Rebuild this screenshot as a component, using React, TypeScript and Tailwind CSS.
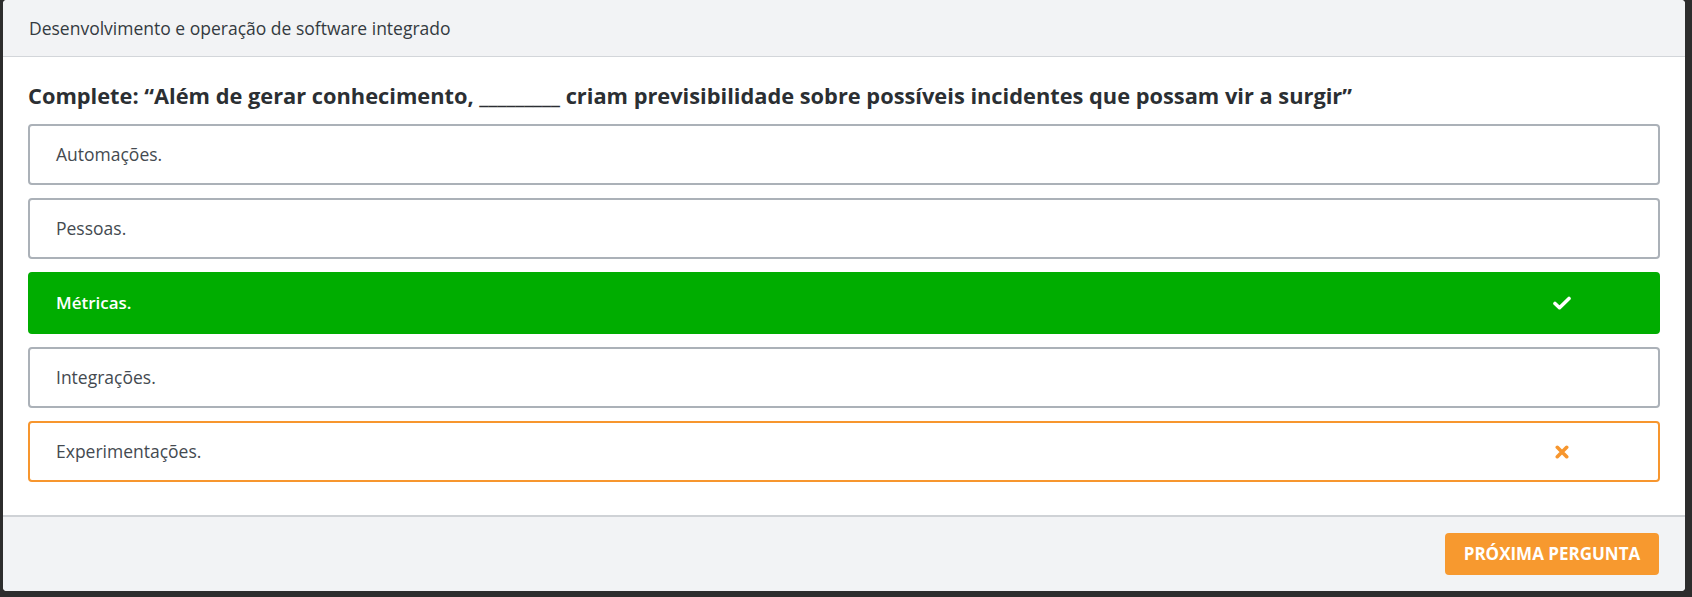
import React from "react";

const options = [
  { text: "Automações.", state: "none" },
  { text: "Pessoas.", state: "none" },
  { text: "Métricas.", state: "correct" },
  { text: "Integrações.", state: "none" },
  { text: "Experimentações.", state: "wrong" },
];

function Check() {
  return (
    <svg width="18" height="14" viewBox="0 0 18 14" aria-hidden="true">
      <path d="M2 7.5 L6.5 11.7 L16 2.5" fill="none" stroke="#fff" strokeWidth="3.6" strokeLinecap="round" strokeLinejoin="round" />
    </svg>
  );
}

function Cross() {
  return (
    <svg width="14" height="14" viewBox="0 0 14 14" aria-hidden="true">
      <path d="M2.3 2.3 L11.7 11.7 M11.7 2.3 L2.3 11.7" fill="none" stroke="#f7962e" strokeWidth="3.6" strokeLinecap="round" />
    </svg>
  );
}

export default function App() {
  return (
    <div
      className="w-full h-[597px] bg-[#2d2d2d] pl-[3px] pr-[7px] pb-[6px]"
      style={{ fontFamily: '"Open Sans", "Noto Sans", sans-serif' }}
    >
      <div className="h-[591px] bg-white rounded-[4px] overflow-hidden flex flex-col">
        <div className="h-[57px] shrink-0 bg-[#f2f3f5] border-b border-[#d3d6da] px-[26px] flex items-center text-[17.5px] text-[#343a40]">
          Desenvolvimento e operação de software integrado
        </div>
        <div className="px-[25px] pt-[25px] pb-[33px]">
          <div className="text-[21.8px] leading-[28px] font-bold text-[#2b2f33] mb-[14px] whitespace-nowrap">
            Complete: “Além de gerar conhecimento, _________ criam previsibilidade sobre possíveis incidentes que possam vir a surgir”
          </div>
          <div className="flex flex-col gap-[13px]">
            {options.map((o) => (
              <div
                key={o.text}
                className={
                  o.state === "correct"
                    ? "h-[62px] rounded-[4px] border-2 border-[#00ad00] bg-[#00ad00] text-white font-semibold flex items-center justify-between pl-[26px] pr-[87px] text-[17px]"
                    : o.state === "wrong"
                    ? "h-[61px] rounded-[4px] border-2 border-[#f7962e] bg-white text-[#444a50] flex items-center justify-between pl-[26px] pr-[89px] text-[17.5px]"
                    : "h-[61px] rounded-[4px] border-2 border-[#abb1b8] bg-white text-[#444a50] flex items-center justify-between pl-[26px] pr-[88px] text-[17.5px]"
                }
              >
                <span>{o.text}</span>
                {o.state === "correct" && <Check />}
                {o.state === "wrong" && <Cross />}
              </div>
            ))}
          </div>
        </div>
        <div className="flex-1 bg-[#f2f3f5] border-t-2 border-[#cfd2d6] flex items-center justify-end pr-[26px]">
          <button className="w-[214px] h-[42px] rounded-[4px] bg-[#f7992f] text-white font-bold text-[17px]">
            PRÓXIMA PERGUNTA
          </button>
        </div>
      </div>
    </div>
  );
}
